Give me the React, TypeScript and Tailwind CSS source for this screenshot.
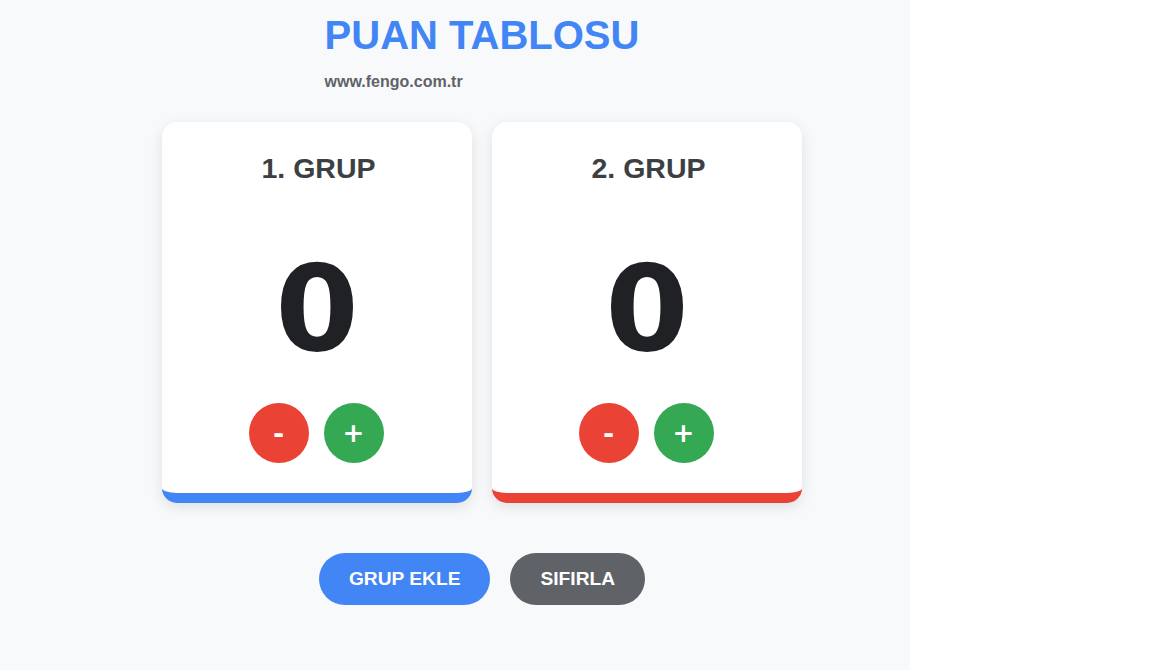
import React, { useState } from "react";

type Group = { name: string; score: number; color: string };

export default function App() {
  const [groups, setGroups] = useState<Group[]>([
    { name: "1. GRUP", score: 0, color: "border-[#4285f4]" },
    { name: "2. GRUP", score: 0, color: "border-[#ea4335]" },
  ]);

  const change = (i: number, d: number) =>
    setGroups((g) => g.map((x, j) => (j === i ? { ...x, score: x.score + d } : x)));

  return (
    <div className="flex w-full min-h-[670px] bg-white font-['Liberation_Sans',Arial,sans-serif]">
      <div className="w-[910px] min-h-[670px] bg-[#f8f9fa] pl-[54px] pt-[12px] flex flex-col items-center">
        <div className="flex flex-col items-start">
          <h1 className="text-[40px] leading-[46px] font-bold text-[#4285f4]">PUAN TABLOSU</h1>
          <p className="mt-[15px] text-[16px] leading-[18px] font-bold text-[#5f6368]">www.fengo.com.tr</p>
        </div>
        <div className="mt-[31px] flex gap-[20px]">
          {groups.map((g, i) => (
            <div
              key={i}
              className={`w-[310px] rounded-[15px] bg-white border-b-[10px] ${g.color} shadow-[0_4px_14px_rgba(0,0,0,0.1)] pt-[30px] pb-[30px] flex flex-col items-center`}
            >
              <h2 className="pl-[3px] text-[28.5px] leading-[33px] font-bold text-[#3c4043]">{g.name}</h2>
              <div className="mt-[54px] text-[120px] leading-[140px] font-bold text-[#202124] font-['DejaVu_Sans',sans-serif]">
                {g.score}
              </div>
              <div className="mt-[24px] flex gap-[15px] -translate-x-[1px]">
                <button
                  onClick={() => change(i, -1)}
                  className="w-[60px] h-[60px] rounded-full bg-[#ea4335] text-white text-[27px] leading-none font-bold flex items-center justify-center font-['DejaVu_Sans',sans-serif]"
                >
                  -
                </button>
                <button
                  onClick={() => change(i, 1)}
                  className="w-[60px] h-[60px] rounded-full bg-[#34a853] text-white text-[26px] leading-none font-bold flex items-center justify-center font-['DejaVu_Sans',sans-serif]"
                >
                  +
                </button>
              </div>
            </div>
          ))}
        </div>
        <div className="mt-[50px] flex gap-[20px]">
          <button className="px-[30px] py-[15px] rounded-full bg-[#4285f4] text-white text-[19.2px] leading-[22px] font-bold">
            GRUP EKLE
          </button>
          <button className="px-[30px] py-[15px] rounded-full bg-[#5f6368] text-white text-[19.2px] leading-[22px] font-bold">
            SIFIRLA
          </button>
        </div>
      </div>
    </div>
  );
}
